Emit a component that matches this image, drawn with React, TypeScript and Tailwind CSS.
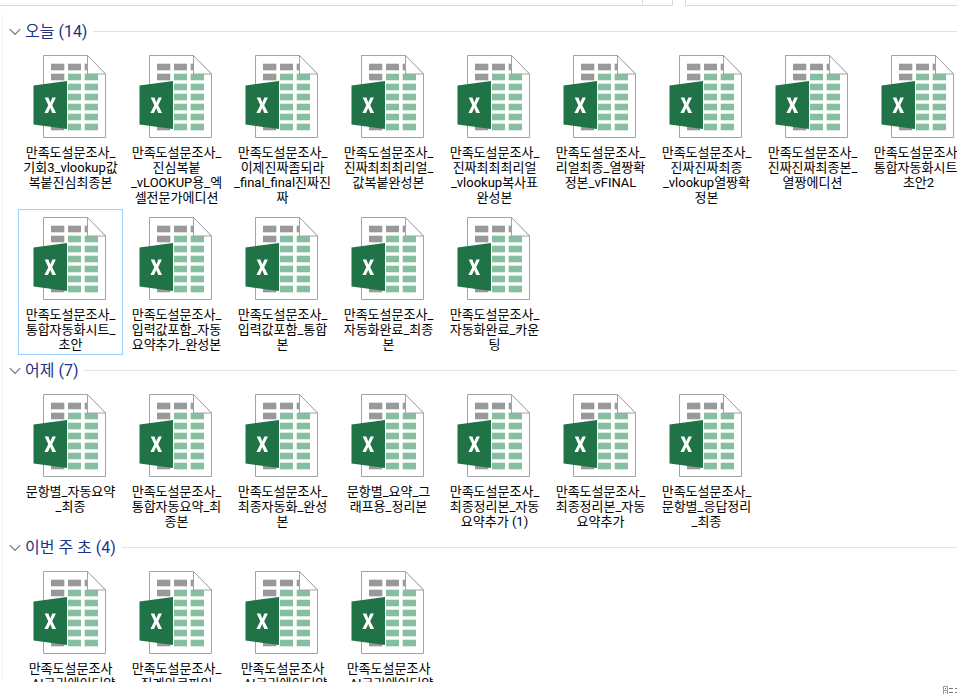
interface FileGroup {
  title: string;
  files: string[][];
}

const groups: FileGroup[] = [
  {
    title: "오늘 (14)",
    files: [
      ["만족도설문조사_", "기회3_vlookup값", "복붙진심최종본"],
      ["만족도설문조사_", "진심복붙", "_vLOOKUP용_엑", "셀전문가에디션"],
      ["만족도설문조사_", "이제진짜좀되라", "_final_final진짜진", "짜"],
      ["만족도설문조사_", "진짜최최최리얼_", "값복붙완성본"],
      ["만족도설문조사_", "진짜최최최리얼", "_vlookup복사표", "완성본"],
      ["만족도설문조사_", "리얼최종_열짱확", "정본_vFINAL"],
      ["만족도설문조사_", "진짜진짜최종", "_vlookup열짱확", "정본"],
      ["만족도설문조사_", "진짜진짜최종본_", "열짱에디션"],
      ["만족도설문조사_", "통합자동화시트_", "초안2"],
      ["만족도설문조사_", "통합자동화시트_", "초안"],
      ["만족도설문조사_", "입력값포함_자동", "요약추가_완성본"],
      ["만족도설문조사_", "입력값포함_통합", "본"],
      ["만족도설문조사_", "자동화완료_최종", "본"],
      ["만족도설문조사_", "자동화완료_카운", "팅"],
    ],
  },
  {
    title: "어제 (7)",
    files: [
      ["문항별_자동요약", "_최종"],
      ["만족도설문조사_", "통합자동요약_최", "종본"],
      ["만족도설문조사_", "최종자동화_완성", "본"],
      ["문항별_요약_그", "래프용_정리본"],
      ["만족도설문조사_", "최종정리본_자동", "요약추가 (1)"],
      ["만족도설문조사_", "최종정리본_자동", "요약추가"],
      ["만족도설문조사_", "문항별_응답정리", "_최종"],
    ],
  },
  {
    title: "이번 주 초 (4)",
    files: [
      ["만족도설문조사", "_AI크리에이터양"],
      ["만족도설문조사_", "집계완료파일"],
      ["만족도설문조사", "_AI크리에이터양"],
      ["만족도설문조사", "_AI크리에이터양"],
    ],
  },
];

const cellRows = [9, 19, 29, 39, 49, 59, 69];

function ExcelIcon() {
  return (
    <svg width="75" height="84" viewBox="0 0 75 84" aria-hidden="true">
      <path d="M10.5 .5H54.5L72.5 19V82.5H10.5Z" fill="#fff" stroke="#a3a3a3" />
      {cellRows.map((y, i) => (
        <g key={y}>
          <rect x="18" y={y - 0.3} width="13.3" height="6.6" fill="#999" />
          <rect x="35" y={y - 0.3} width="13" height="6.6" fill={i === 0 ? "#999" : "#86bf9f"} />
          <rect
            x="51.7"
            y={y - 0.3}
            width={i === 0 ? 2.5 : 13.3}
            height="6.6"
            fill={i === 0 ? "#999" : "#86bf9f"}
          />
        </g>
      ))}
      <path d="M54.5 .5V19H72.5Z" fill="#fff" stroke="#a3a3a3" />
      <path d="M.5 30.5L34 26V74L.5 69.5Z" fill="#207347" />
      <path
        d="M11.7 42.5H15.4L17.3 47.5L19.4 42.5H22.9L19.2 50.2L23.1 58H19.3L17.2 52.9L15 58H11.4L15.3 50.2Z"
        fill="#fff"
      />
    </svg>
  );
}

function FileItem({ lines, selected }: { lines: string[]; selected: boolean }) {
  return (
    <button
      className={`flex w-[105px] shrink-0 flex-col items-center gap-[6px] border pt-[7px] pb-[2px] ${
        selected ? "border-[#99d1ff]" : "border-transparent"
      }`}
    >
      <ExcelIcon />
      <span className="text-[13px] leading-[15px] whitespace-nowrap text-black">
        {lines.map((line, idx) => (
          <span key={idx} className="block">
            {line}
          </span>
        ))}
      </span>
    </button>
  );
}

function Group({ group, selectedIdx }: { group: FileGroup; selectedIdx: number }) {
  return (
    <section>
      <button className="flex h-[31px] w-full items-center pl-[6px] text-[#1e3287]">
        <svg width="12" height="8" viewBox="0 0 12 8" fill="none" aria-hidden="true">
          <path d="M.8 1.2L6 6.4L11.2 1.2" stroke="#777" strokeWidth="1.2" />
        </svg>
        <span className="ml-1 text-[16px] leading-5">{group.title}</span>
        <span className="ml-[6px] h-px flex-1 bg-[#e2e2e2]" />
      </button>
      <div className="-mr-24 flex flex-wrap items-start gap-px pl-[15px]">
        {group.files.map((lines, idx) => (
          <FileItem key={idx} lines={lines} selected={idx === selectedIdx} />
        ))}
      </div>
    </section>
  );
}

export default function App() {
  return (
    <div className="flex h-screen flex-col overflow-hidden bg-white font-['Roboto','Noto_Sans_CJK_KR',sans-serif]">
      <header className="flex h-[6px] shrink-0 gap-3">
        <div className="flex flex-[673] border-r border-b border-[#d9d9d9]">
          <div className="flex-1" />
          <div className="w-[30px] border-l border-[#d9d9d9]" />
        </div>
        <div className="flex-[272] border-b border-l border-[#d9d9d9]" />
      </header>
      <main className="mt-[7px] ml-[2px] min-h-0 flex-1 overflow-hidden border-l border-[#f3f3f3] pt-[3px]">
        {groups.map((group, idx) => (
          <Group key={group.title} group={group} selectedIdx={idx === 0 ? 9 : -1} />
        ))}
      </main>
      <footer className="flex h-3 shrink-0 justify-end overflow-hidden pt-1">
        <svg width="14" height="12" viewBox="0 0 14 12" fill="none" aria-hidden="true">
          <path d="M.5 .5H4.5V11.5H.5ZM.5 4.5H4.5" stroke="#999" />
          <path d="M6 2.5H10M12 2.5H14M6 6.5H10M12 6.5H14" stroke="#777" />
          <path d="M2 2.5H3" stroke="#3f8f5a" />
          <path d="M2 6.5H3" stroke="#3b8eea" />
        </svg>
      </footer>
    </div>
  );
}
